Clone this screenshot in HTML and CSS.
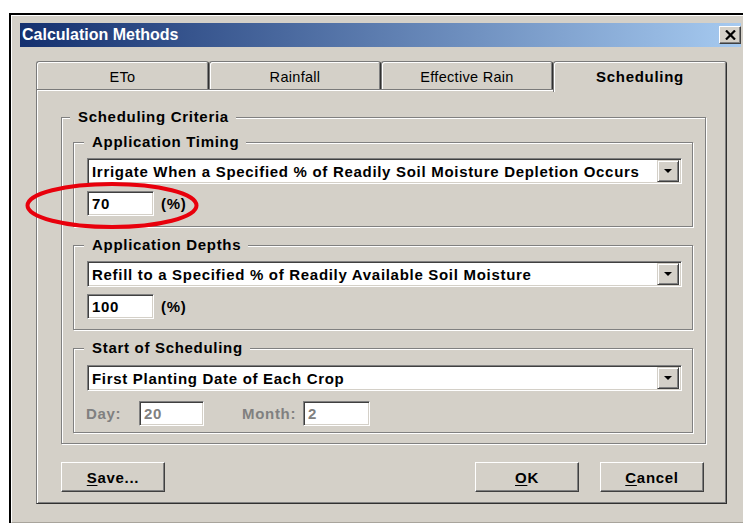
FILE: index.html
```html
<!DOCTYPE html>
<html>
<head>
<meta charset="utf-8">
<title>Calculation Methods</title>
<link rel="stylesheet" href="styles.css">
</head>
<body>
<div class="frame">
  <div class="window">
    <div class="titlebar">
      <span class="title">Calculation Methods</span>
      <span class="close-btn">
        <svg width="11" height="10" viewBox="0 0 11 10"><path d="M1 0.5 L10 9.5 M10 0.5 L1 9.5" stroke="#000" stroke-width="2.2"/></svg>
      </span>
    </div>
    <div class="dialog">
      <div class="tabs">
        <div class="tab tab-a">ETo</div>
        <div class="tab tab-b">Rainfall</div>
        <div class="tab tab-c">Effective Rain</div>
        <div class="tab tab-d active">Scheduling</div>
      </div>
      <div class="panel">
        <fieldset class="group outer">
          <legend>Scheduling Criteria</legend>

          <fieldset class="group inner">
            <legend>Application Timing</legend>
            <div class="combo">
              <span class="combo-value">Irrigate When a Specified % of Readily Soil Moisture Depletion Occurs</span>
              <span class="drop"><svg width="8" height="4" viewBox="0 0 8 4"><path d="M0 0 H8 L4 4 Z" fill="#000"/></svg></span>
            </div>
            <div class="row">
              <span class="field pct">70</span>
              <span class="unit">(%)</span>
            </div>
          </fieldset>

          <fieldset class="group inner spaced">
            <legend>Application Depths</legend>
            <div class="combo">
              <span class="combo-value">Refill to a Specified % of Readily Available Soil Moisture</span>
              <span class="drop"><svg width="8" height="4" viewBox="0 0 8 4"><path d="M0 0 H8 L4 4 Z" fill="#000"/></svg></span>
            </div>
            <div class="row">
              <span class="field pct">100</span>
              <span class="unit">(%)</span>
            </div>
          </fieldset>

          <fieldset class="group inner spaced start">
            <legend>Start of Scheduling</legend>
            <div class="combo">
              <span class="combo-value">First Planting Date of Each Crop</span>
              <span class="drop"><svg width="8" height="4" viewBox="0 0 8 4"><path d="M0 0 H8 L4 4 Z" fill="#000"/></svg></span>
            </div>
            <div class="row date-row">
              <span class="muted day-label">Day:</span>
              <span class="field disabled day">20</span>
              <span class="muted month-label">Month:</span>
              <span class="field disabled month">2</span>
            </div>
          </fieldset>
        </fieldset>

        <div class="buttons">
          <button class="btn"><u>S</u>ave...</button>
          <span class="spacer"></span>
          <button class="btn"><u>O</u>K</button>
          <button class="btn"><u>C</u>ancel</button>
        </div>
      </div>
    </div>
  </div>
</div>
<svg class="mark" width="176" height="50" viewBox="0 0 176 50">
  <ellipse cx="87" cy="23.5" rx="84.5" ry="21.5" fill="none" stroke="#e8000c" stroke-width="4"/>
</svg>
</body>
</html>
```
FILE: styles.css
```css
html, body {
  margin: 0;
  padding: 0;
  background: #fff;
}

body {
  position: relative;
  width: 743px;
  height: 523px;
  overflow: hidden;
  font-family: "Liberation Sans", Arial, sans-serif;
  font-weight: bold;
  font-size: 15px;
  letter-spacing: 0.7px;
  color: #000;
}

/* black rule around the dialog */
.frame {
  margin: 13px 0 0 9px;
  border-top: 2px solid #000;
  border-left: 2px solid #000;
  height: 508px;
}

.window {
  background: #d4d0c8;
  border-top: 1px solid #fff;
  border-left: 1px solid #fff;
  height: 506px;
  border-bottom: 1px solid #a8a49c;
}

.titlebar {
  margin: 7px 2px 0 8px;
  height: 24px;
  background: linear-gradient(to right, #14306f, #a6caf0);
  display: flex;
  align-items: center;
  justify-content: space-between;
}

.title {
  color: #fff;
  font-size: 16px;
  letter-spacing: 0;
  padding-left: 2px;
}

.close-btn {
  width: 20px;
  height: 16px;
  margin-right: 0;
  background: #d4d0c8;
  border-top: 1px solid #fff;
  border-left: 1px solid #fff;
  border-right: 1px solid #404040;
  border-bottom: 1px solid #404040;
  box-shadow: inset -1px -1px 0 #808080;
  display: flex;
  align-items: center;
  justify-content: center;
}

.dialog {
  padding: 14px 0 0 24px;
}

/* tab strip */
.tabs {
  display: flex;
  height: 28px;
  position: relative;
  z-index: 1;
}

.tab {
  box-sizing: border-box;
  height: 28px;
  border-top: 1px solid #7a7a7a;
  border-left: 1px solid #7a7a7a;
  border-right: 1px solid #303030;
  border-radius: 3px 3px 0 0;
  box-shadow: inset 1px 1px 0 #fff, inset -1px 0 0 #808080;
  display: flex;
  align-items: center;
  justify-content: center;
  font-weight: normal;
  font-size: 14.5px;
  letter-spacing: 0.3px;
  padding-top: 2px;
}

.tab-a { width: 173px; }
.tab-b { width: 172px; }
.tab-c { width: 172px; }
.tab-d { width: 174px; }

.tab.active {
  height: 31px;
  background: #d4d0c8;
  font-weight: bold;
  font-size: 15px;
  letter-spacing: 0.7px;
  padding-top: 0;
  padding-bottom: 2px;
}

.panel {
  width: 691px;
  box-sizing: border-box;
  border-top: 1px solid #7a7a7a;
  border-left: 1px solid #7a7a7a;
  border-right: 1px solid #303030;
  border-bottom: 1px solid #303030;
  box-shadow: inset 1px 1px 0 #fff, inset -1px -1px 0 #808080;
  padding: 19px 20px 10px 24px;
  height: 415px;
}

/* etched group frames */
.group {
  margin: 0;
  border: 1px solid #808080;
  box-shadow: inset 1px 1px 0 #fff, 1px 1px 0 #fff;
  min-inline-size: 0;
}

.group legend {
  margin-left: -3px;
  padding: 0 7px 0 8px;
  line-height: 16px;
  background: #d4d0c8;
}

.outer {
  padding: 9px 12px 10px 11px;
}

.inner {
  padding: 8px 10px 10px 13px;
}

.inner.spaced {
  margin-top: 10px;
}

.inner.start {
  padding-top: 9px;
  padding-bottom: 6px;
}

.combo {
  box-sizing: border-box;
  height: 26px;
  background: #fff;
  border-top: 1px solid #808080;
  border-left: 1px solid #808080;
  border-right: 1px solid #fff;
  border-bottom: 1px solid #fff;
  box-shadow: inset 1px 1px 0 #404040, inset -1px -1px 0 #d4d0c8;
  padding: 2px 2px 2px 4px;
  display: flex;
  align-items: center;
}

.combo-value {
  flex: 1;
  white-space: nowrap;
}

.drop {
  box-sizing: border-box;
  width: 22px;
  height: 22px;
  background: #d4d0c8;
  border-top: 1px solid #d4d0c8;
  border-left: 1px solid #d4d0c8;
  border-right: 1px solid #404040;
  border-bottom: 1px solid #404040;
  box-shadow: inset 1px 1px 0 #fff, inset -1px -1px 0 #808080;
  display: flex;
  align-items: center;
  justify-content: center;
}

.row {
  display: flex;
  align-items: center;
  margin-top: 7px;
}

.date-row {
  margin-top: 10px;
}

.field {
  box-sizing: border-box;
  height: 25px;
  background: #fff;
  border-top: 1px solid #808080;
  border-left: 1px solid #808080;
  border-right: 1px solid #fff;
  border-bottom: 1px solid #fff;
  box-shadow: inset 1px 1px 0 #404040, inset -1px -1px 0 #d4d0c8;
  padding-left: 4px;
  display: flex;
  align-items: center;
}

.pct {
  width: 67px;
}

.unit {
  margin-left: 7px;
}

.muted {
  color: #808080;
}

.field.disabled {
  color: #808080;
}

.day-label {
  width: 53px;
  margin-left: -1px;
}

.day {
  width: 65px;
}

.month-label {
  margin-left: 38px;
  width: 61px;
}

.month {
  width: 67px;
}

.buttons {
  display: flex;
  margin-top: 18px;
  margin-right: 2px;
  gap: 21px;
}

.spacer {
  flex: 1;
}

.btn {
  box-sizing: border-box;
  width: 104px;
  height: 30px;
  padding: 0;
  font: inherit;
  letter-spacing: inherit;
  color: #000;
  background: #d4d0c8;
  border-top: 1px solid #fff;
  border-left: 1px solid #fff;
  border-right: 1px solid #404040;
  border-bottom: 1px solid #404040;
  box-shadow: inset -1px -1px 0 #808080;
}

.btn u {
  text-underline-offset: 2px;
}

/* hand-drawn highlight around the timing value */
.mark {
  position: absolute;
  left: 25px;
  top: 182px;
}
```
